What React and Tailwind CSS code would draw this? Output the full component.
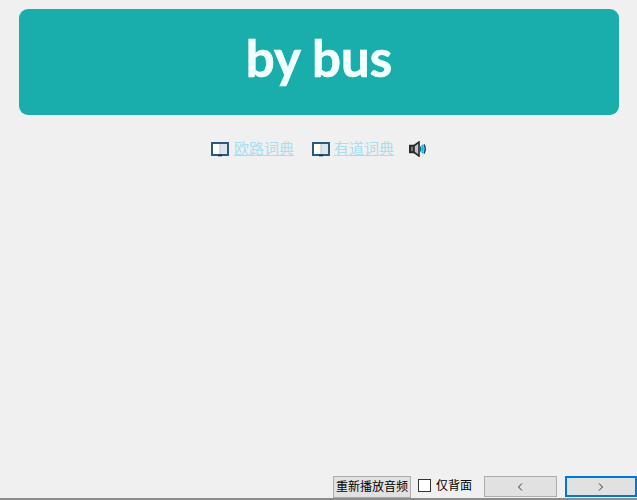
const Book = () => (
  <svg width="18" height="16" viewBox="0 0 18 16" className="shrink-0">
    <path d="M1 2H17V14H1Z" fill="#f7f9fb" stroke="#2b5a80" strokeWidth="2" />
    <path d="M2 3H8.5V13H2Z" fill="#ffffff" />
    <path d="M9.5 3H16V13H9.5Z" fill="#dde4eb" />
    <path d="M9 3V13" stroke="#b4c3d0" strokeWidth="1" />
    <path d="M7 14.5H11" stroke="#0f2f4c" strokeWidth="1.6" />
  </svg>
);

const Speaker = () => (
  <svg width="18" height="16" viewBox="0 0 18 16" className="shrink-0">
    <path d="M1 4.75H5V11.25H1Z" fill="#777777" stroke="#2a2a2a" strokeWidth="2" />
    <path d="M5 4.75L10 1V15L5 11.25Z" fill="#c4c4c4" stroke="#2a2a2a" strokeWidth="1.6" />
    <path d="M11.3 5.5Q12.5 8 11.3 10.5" fill="none" stroke="#0a6f98" strokeWidth="1.6" />
    <path d="M13 4Q15 8 13 12" fill="none" stroke="#16b4e6" strokeWidth="1.7" />
    <path d="M15 3.4Q17.4 8 15 12.6" fill="none" stroke="#0b4f72" strokeWidth="1.6" />
  </svg>
);

const cjk = "font-['Liberation_Sans','Noto_Sans_CJK_SC',sans-serif]";

export default function App() {
  return (
    <div className={`h-[500px] w-[637px] flex flex-col bg-[#f0f0f0] overflow-hidden ${cjk}`}>
      <div className="ml-[19px] mr-[18px] mt-[9px] h-[106px] rounded-[9px] bg-[#19aeac] flex items-center justify-center">
        <span className="font-['Lato',sans-serif] font-bold text-[51px] leading-none text-[#f2fffe] -mt-[9px] [-webkit-text-stroke:0.7px_#f2fffe]">by bus</span>
      </div>
      <div className="mt-[24px] h-[20px] flex items-center justify-center pl-[1px]">
        <Book />
        <a className="ml-[5px] text-[15px] leading-[20px] text-[#a8def0] underline">欧路词典</a>
        <span className="w-[18px]" />
        <Book />
        <a className="ml-[4px] text-[15px] leading-[20px] text-[#a8def0] underline">有道词典</a>
        <span className="w-[15px]" />
        <Speaker />
      </div>
      <div className="flex-1" />
      <div className="h-[24px] flex items-start justify-end border-b-2 border-[#8c8c8c]">
        <button className="h-[22px] w-[78px] bg-[#e1e1e1] border border-[#adadad] text-[12px] leading-none text-black whitespace-nowrap">重新播放音频</button>
        <span className="ml-[7px] mt-[3px] w-[13px] h-[13px] bg-white border border-[#333]" />
        <span className="ml-[5px] text-[12px] leading-[20px] text-black">仅背面</span>
        <button className="ml-[12px] h-[21px] w-[73px] bg-[#e1e1e1] border border-[#adadad] flex items-center justify-center">
          <svg width="6" height="8" viewBox="0 0 6 8" className="-ml-[2px]"><path d="M5 0.5L1.5 4L5 7.5" fill="none" stroke="#333" strokeWidth="1" /></svg>
        </button>
        <button className="ml-[8px] h-[21px] w-[72px] bg-[#e1e1e1] border-2 border-[#0078d7] flex items-center justify-center">
          <svg width="6" height="8" viewBox="0 0 6 8"><path d="M1 0.5L4.5 4L1 7.5" fill="none" stroke="#333" strokeWidth="1" /></svg>
        </button>
      </div>
    </div>
  );
}
